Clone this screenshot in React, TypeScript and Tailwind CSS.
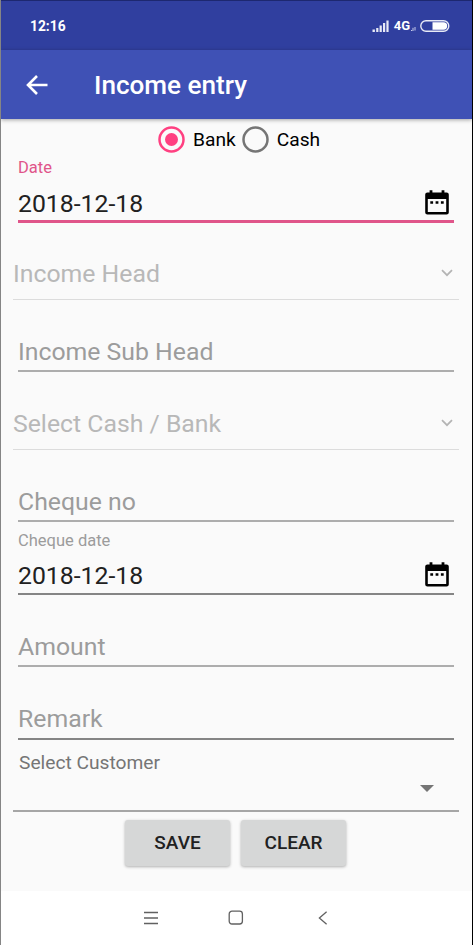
import { useState } from 'react';

function CalendarIcon() {
  return (
    <svg width="24" height="25" viewBox="0 0 24 26" preserveAspectRatio="none" className="mb-[3px] shrink-0">
      <path
        fillRule="evenodd"
        d="M4.6 0.3h2.8v2.2h9.2V0.3h2.8v2.2h2.2a2.2 2.2 0 0 1 2.2 2.2v18.6a2.2 2.2 0 0 1-2.2 2.2H2.4a2.2 2.2 0 0 1-2.2-2.2V4.7a2.2 2.2 0 0 1 2.2-2.2h2.2zM2.8 9.3v13.6h18.4V9.3z"
      />
      <path d="M5.3 11.6h2.8v2.8H5.3zM10.6 11.6h2.8v2.8h-2.8zM15.9 11.6h2.8v2.8h-2.8z" />
    </svg>
  );
}

function ChevronIcon() {
  return (
    <svg width="12" height="8" viewBox="0 0 12 8" fill="none" stroke="#b4b4b4" strokeWidth="1.7">
      <path d="M1 1.2l5 5 5-5" />
    </svg>
  );
}

interface FieldProps {
  text: string;
  className: string;
}

function TextField({ text, className }: FieldProps) {
  return (
    <div className={`ml-[17px] mr-[18px] flex items-end text-[24.8px] leading-7 text-[#9c9c9c] ${className}`}>
      <span>{text}</span>
    </div>
  );
}

function SelectField({ text, className }: FieldProps) {
  return (
    <button
      className={`ml-3 mr-[13px] flex items-end justify-between border-b border-[#dcdcdc] pb-[11px] pr-[6px] text-[24.8px] leading-7 text-[#b8b8b8] ${className}`}
    >
      <span>{text}</span>
      <span className="flex pb-[11px]">
        <ChevronIcon />
      </span>
    </button>
  );
}

interface DateFieldProps {
  label: string;
  value: string;
  active?: boolean;
}

function DateField({ label, value, active }: DateFieldProps) {
  return (
    <div
      className={`ml-[17px] mr-[18px] flex flex-col justify-between ${
        active
          ? 'h-[66px] border-b-[3px] border-[#e0558a] pb-px pt-px'
          : 'h-[73px] border-b-2 border-[#858585] pb-[2px] pt-[9px]'
      }`}
    >
      <span className={`text-[16.5px] leading-5 ${active ? 'text-[#e0558a]' : 'text-[#9c9c9c]'}`}>{label}</span>
      <div className="flex items-center justify-between pr-[5px]">
        <span className="text-[24.8px] leading-[30px] text-[#212121]">{value}</span>
        <CalendarIcon />
      </div>
    </div>
  );
}

export default function App() {
  const [account, setAccount] = useState('Bank');

  return (
    <div className="flex h-[945px] w-[473px] flex-col overflow-hidden border-l border-r border-l-[#858585] border-r-black bg-[#fafafa] font-['Roboto',sans-serif]">
      {/* Status bar */}
      <div className="flex h-[50px] shrink-0 items-center justify-between border-t border-[#1d2870] bg-[#303f9f] pl-[29px] pr-[22px] text-white">
        <span className="text-[13.8px] font-bold leading-4">12:16</span>
        <div className="flex items-center">
          <svg width="18" height="12" viewBox="0 0 18 12" fill="#e8eaf6">
            <path d="M0.5 9.5h2.4V12H0.5zM4.2 8h2.2v4H4.2zM7.6 5.6h2.2V12H7.6zM11 3h2.2v9H11zM14.4 0.5h2.2V12h-2.2z" />
          </svg>
          <span className="ml-[4px] text-[13px] font-bold leading-4">4G</span>
          <svg width="6" height="6" viewBox="0 0 6 6" className="mr-[4px] mt-[6px]" fill="none" stroke="#c5cae9">
            <path d="M1 4.5h1.2M3 5V1.8M5 1v3.5" />
          </svg>
          <svg width="30" height="12" viewBox="0 0 30 12">
            <rect x="0.8" y="0.8" width="28" height="10.4" rx="5.2" fill="none" stroke="#e8eaf6" strokeWidth="1.4" />
            <path d="M12.5 2.3h11a3.7 3.7 0 0 1 0 7.4h-11z" fill="#fff" />
          </svg>
        </div>
      </div>

      {/* App bar */}
      <header className="z-10 flex h-[69px] shrink-0 items-center bg-[#3f51b5] pl-[25px] text-white shadow-[0_1px_4px_rgba(0,0,0,0.35)]">
        <svg width="22" height="20" viewBox="0 0 22 20" fill="none" stroke="#fff" strokeWidth="2.6">
          <path d="M21.5 10H2M11 1L2 10l9 9" />
        </svg>
        <h1 className="ml-[46px] text-[26.1px] font-medium leading-8">Income entry</h1>
      </header>

      <main className="flex h-[772px] shrink-0 flex-col">
        {/* Account type */}
        <div className="flex h-[38px] items-center pl-[157px] pt-[3px] text-[19.2px] text-black">
          {['Bank', 'Cash'].map((type) => (
            <button key={type} className="mr-[6px] flex items-center gap-[8px]" onClick={() => setAccount(type)}>
              <svg width="27" height="27" viewBox="0 0 27 27">
                <circle
                  cx="13.5"
                  cy="13.5"
                  r="12"
                  fill="none"
                  stroke={account === type ? '#ff4081' : '#757575'}
                  strokeWidth="2.5"
                />
                {account === type && <circle cx="13.5" cy="13.5" r="6.5" fill="#ff4081" />}
              </svg>
              <span className="pt-px">{type}</span>
            </button>
          ))}
        </div>

        <DateField label="Date" value="2018-12-18" active />
        <SelectField text="Income Head" className="h-[77px]" />
        <TextField text="Income Sub Head" className="h-[72px] border-b-2 border-[#adadad] pb-[4px]" />
        <SelectField text="Select Cash / Bank" className="h-[78px]" />
        <TextField text="Cheque no" className="h-[72px] border-b-2 border-[#adadad] pb-[4px]" />
        <DateField label="Cheque date" value="2018-12-18" />
        <TextField text="Amount" className="h-[72px] border-b-2 border-[#adadad] pb-[4px]" />
        <TextField text="Remark" className="h-[73px] border-b-2 border-[#858585] pb-[5px]" />

        {/* Customer */}
        <div className="ml-3 mr-[13px] flex h-[72px] flex-col justify-between border-b-2 border-[#a6a6a6] pl-[6px] pt-[11px]">
          <span className="text-[19.2px] leading-6 text-[#757575]">Select Customer</span>
          <svg width="14" height="7" viewBox="0 0 14 7" className="mb-[18px] mr-[25px] self-end" fill="#757575">
            <path d="M0 0h14L7 7z" />
          </svg>
        </div>

        {/* Actions */}
        <div className="flex justify-center gap-[11px] pr-[2px] pt-[8px] text-[19px] font-medium text-[#212121]">
          <button className="h-[46px] w-[105px] rounded-[3px] bg-[#d6d7d7] shadow-[0_1px_3px_rgba(0,0,0,0.3)]">SAVE</button>
          <button className="h-[46px] w-[105px] rounded-[3px] bg-[#d6d7d7] shadow-[0_1px_3px_rgba(0,0,0,0.3)]">CLEAR</button>
        </div>
      </main>

      {/* System navigation */}
      <nav className="flex h-[54px] shrink-0 items-center bg-white pl-[142px]">
        <svg width="16" height="14" viewBox="0 0 16 14" stroke="#616161" strokeWidth="1.3">
          <path d="M1 1.5h14M1 7h14M1 12.5h14" />
        </svg>
        <svg width="16" height="16" viewBox="0 0 16 16" className="ml-[69px]" fill="none" stroke="#616161" strokeWidth="1.3">
          <rect x="1.2" y="1.2" width="13.2" height="12.8" rx="2.8" />
        </svg>
        <svg width="10" height="14" viewBox="0 0 10 14" className="ml-[74px]" fill="none" stroke="#616161" strokeWidth="1.3">
          <path d="M8.6 0.8L1.4 7l7.2 6.2" />
        </svg>
      </nav>
    </div>
  );
}
